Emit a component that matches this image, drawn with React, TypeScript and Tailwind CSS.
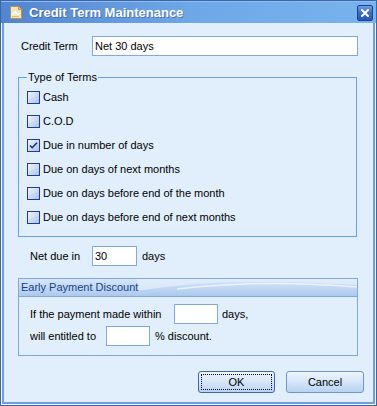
import React from "react";

function Check({ checked }: { checked?: boolean }) {
  return (
    <span className="w-[13px] h-[13px] shrink-0 border border-[#1e3d8f] bg-gradient-to-br from-[#f2f6fd] via-[#cddcf4] to-[#a9c1ea] flex items-center justify-center">
      {checked && (
        <svg width="9" height="9" viewBox="0 0 9 9">
          <path d="M1 4.5 L3.2 6.7 L8 1.8" fill="none" stroke="#1c2f7a" strokeWidth="1.6" />
        </svg>
      )}
    </span>
  );
}

function Row({ label, checked }: { label: string; checked?: boolean }) {
  return (
    <div className="h-[24px] flex items-center gap-[3px]">
      <Check checked={checked} />
      <span>{label}</span>
    </div>
  );
}

function Input({ w, value }: { w: string; value?: string }) {
  return (
    <div className={`${w} h-[20px] bg-white border border-[#80a9e0] flex items-center pl-[2px] text-black`}>
      {value}
    </div>
  );
}

export default function App() {
  return (
    <div
      className="w-[377px] h-[406px] border border-[#3d66a8] flex flex-col text-[11px] text-black"
      style={{ fontFamily: '"Liberation Sans", Arial, sans-serif' }}
    >
      {/* Title bar */}
      <div className="h-[22px] shrink-0 bg-gradient-to-r from-[#5384cf] via-[#6ea7e8] to-[#79b3ec] flex items-center pl-[8px] pr-[2px] border-t border-[#8fbdf0]">
        <svg width="14" height="15" viewBox="0 0 14 15" className="shrink-0">
          <path d="M1.5 1.5 H9.5 L12.5 4.5 V13.5 H1.5 Z" fill="#f3e6bf" stroke="#b8954a" strokeWidth="1" />
          <path d="M9.5 1.5 V4.5 H12.5" fill="#e0c88a" stroke="#b8954a" strokeWidth="1" />
          <path d="M3 10 L6 7 L9 9.5 L11 8" fill="none" stroke="#ffffff" strokeWidth="1.4" />
          <path d="M3 11.5 H10" stroke="#d7bf82" strokeWidth="1" />
        </svg>
        <span
          className="ml-[6px] text-white font-bold text-[13px] leading-none"
          style={{ textShadow: "1px 1px 0 rgba(30,60,120,0.45)" }}
        >
          Credit Term Maintenance
        </span>
        <div className="ml-auto mr-[1px] w-[16px] h-[16px] rounded-[2px] border border-[#1d3f8c] bg-gradient-to-b from-[#6e9ce6] via-[#3c6cc8] to-[#2a57b2] flex items-center justify-center">
          <svg width="8" height="8" viewBox="0 0 8 8">
            <path d="M1 1 L7 7 M7 1 L1 7" stroke="#ffffff" strokeWidth="2" strokeLinecap="square" />
          </svg>
        </div>
      </div>

      {/* Body */}
      <div className="flex-1 flex flex-col border-x border-b border-white">
        <div className="flex-1 flex flex-col border-x-2 border-b-2 border-[#6c9fdc] bg-[#e1eefb] pl-[14px] pr-[15px]">
          {/* Credit term */}
          <div className="mt-[13px] h-[20px] flex items-center">
            <span className="w-[74px] pl-[3px]">Credit Term</span>
            <Input w="w-[266px]" value="Net 30 days" />
          </div>

          {/* Type of terms */}
          <fieldset className="mt-[14px] w-[339px] border border-[#64a2ea] pl-[8px] pr-[8px] pb-[7px] m-0">
            <legend className="px-[1px] leading-[14px]">Type of Terms</legend>
            <div className="pt-[1px] flex flex-col">
              <Row label="Cash" />
              <Row label="C.O.D" />
              <Row label="Due in number of days" checked />
              <Row label="Due on days of next months" />
              <Row label="Due on days before end of the month" />
              <Row label="Due on days before end of next months" />
            </div>
          </fieldset>

          {/* Net due */}
          <div className="mt-[9px] h-[20px] flex items-center pl-[12px]">
            <span className="w-[62px]">Net due in</span>
            <Input w="w-[45px]" value="30" />
            <span className="ml-[5px]">days</span>
          </div>

          {/* Early payment */}
          <div className="mt-[12px] w-[340px] border border-[#80a9df] flex flex-col">
            <div className="h-[18px] border-b border-[#80a9df] bg-gradient-to-b from-[#d6e6f9] via-[#c2d8f4] to-[#abc9ee] flex items-center pl-[2px] text-[#15428b] relative overflow-hidden">
              <svg className="absolute right-0 top-0" width="220" height="18" viewBox="0 0 220 18" preserveAspectRatio="none">
                <path d="M0 12 C60 2 120 0 220 6 L220 0 L0 0 Z" fill="#e6f0fc" opacity="0.7" />
                <path d="M40 10 C100 3 160 3 220 8" fill="none" stroke="#f4f8fe" strokeWidth="1.5" opacity="0.8" />
              </svg>
              <span className="relative">Early Payment Discount</span>
            </div>
            <div className="pt-[7px] pb-[9px] pl-[11px] flex flex-col gap-[2px]">
              <div className="h-[20px] flex items-center">
                <span className="w-[144px]">If the payment made within</span>
                <Input w="w-[44px]" />
                <span className="ml-[4px]">days,</span>
              </div>
              <div className="h-[20px] flex items-center">
                <span className="w-[76px]">will entitled to</span>
                <Input w="w-[44px]" />
                <span className="ml-[5px]">% discount.</span>
              </div>
            </div>
          </div>

          {/* Buttons */}
          <div className="mt-[15px] flex justify-end gap-[11px] mr-[-6px]">
            <div className="w-[77px] h-[22px] rounded-[3px] border border-[#3f67ad] bg-gradient-to-b from-[#eef5fd] via-[#d5e5f9] to-[#b9d2f2] p-[2px]">
              <div className="w-full h-full border border-dotted border-black flex items-center justify-center">
                OK
              </div>
            </div>
            <div className="w-[78px] h-[22px] rounded-[3px] border border-[#6f98d2] bg-gradient-to-b from-[#eef5fd] via-[#d5e5f9] to-[#b9d2f2] flex items-center justify-center">
              Cancel
            </div>
          </div>
        </div>
      </div>
    </div>
  );
}
